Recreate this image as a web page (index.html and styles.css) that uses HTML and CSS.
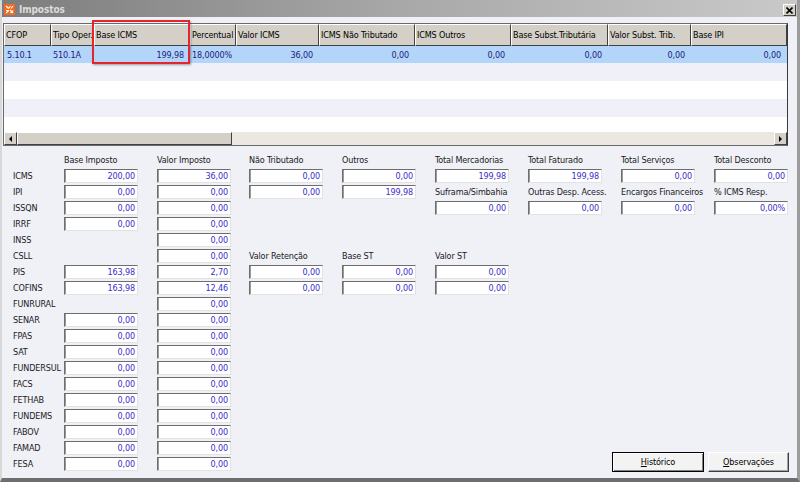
FILE: index.html
```html
<!DOCTYPE html>
<html lang="pt-BR">
<head>
  <meta charset="UTF-8">
  <title>Impostos</title>
  <link rel="stylesheet" href="styles.css">
</head>
<body>
  <div class="window">
    <!-- barra de título -->
    <div class="titlebar">
      <svg class="app-icon" width="11" height="11" viewBox="0 0 11 11">
        <rect width="11" height="11" fill="#f26a1b"/>
        <path d="M2 2l2.5 2.5M6.5 2l-2 2.5M2 6.5h3M6 6l3 3M9 2L7 4.5M2 9l2.5-2M6.5 9l2.5-2.5" stroke="#fff" stroke-width="1.1" fill="none"/>
      </svg>
      <span class="title">Impostos</span>
      <span class="close-btn">
        <svg width="7" height="7" viewBox="0 0 7 7"><path d="M0.5 0.5l6 6M6.5 0.5l-6 6" stroke="#000" stroke-width="1.6"/></svg>
      </span>
    </div>

    <div class="content">
      <!-- grade de CFOP -->
      <div class="grid">
        <div class="grid-head cols">
          <div>CFOP</div>
          <div>Tipo Oper.</div>
          <div>Base ICMS</div>
          <div>Percentual</div>
          <div>Valor ICMS</div>
          <div>ICMS Não Tributado</div>
          <div>ICMS Outros</div>
          <div>Base Subst.Tributária</div>
          <div>Valor Subst. Trib.</div>
          <div>Base IPI</div>
        </div>
        <div class="grid-body">
          <div class="grid-row cols selected">
            <div class="pad">5.10.1</div>
            <div>510.1A</div>
            <div class="num">199,98</div>
            <div>18,0000%</div>
            <div class="num">36,00</div>
            <div class="num">0,00</div>
            <div class="num">0,00</div>
            <div class="num">0,00</div>
            <div class="num">0,00</div>
            <div class="num">0,00</div>
          </div>
          <div class="grid-row alt"></div>
          <div class="grid-row"></div>
          <div class="grid-row alt"></div>
          <div class="grid-row"></div>
        </div>
        <div class="hscroll">
          <span class="sb-btn"><i class="arrow-left"></i></span>
          <span class="sb-thumb"></span>
          <span class="sb-track"></span>
          <span class="sb-btn"><i class="arrow-right"></i></span>
        </div>
      </div>
      <div class="highlight"></div>

      <!-- valores dos impostos -->
      <div class="form">
        <div class="tax-table">
          <div></div><div class="col-title">Base Imposto</div><div class="col-title">Valor Imposto</div>
          <div class="tax-name">ICMS</div><div class="field">200,00</div><div class="field">36,00</div>
          <div class="tax-name">IPI</div><div class="field">0,00</div><div class="field">0,00</div>
          <div class="tax-name">ISSQN</div><div class="field">0,00</div><div class="field">0,00</div>
          <div class="tax-name">IRRF</div><div class="field">0,00</div><div class="field">0,00</div>
          <div class="tax-name">INSS</div><div></div><div class="field">0,00</div>
          <div class="tax-name">CSLL</div><div></div><div class="field">0,00</div>
          <div class="tax-name">PIS</div><div class="field">163,98</div><div class="field">2,70</div>
          <div class="tax-name">COFINS</div><div class="field">163,98</div><div class="field">12,46</div>
          <div class="tax-name">FUNRURAL</div><div></div><div class="field">0,00</div>
          <div class="tax-name">SENAR</div><div class="field">0,00</div><div class="field">0,00</div>
          <div class="tax-name">FPAS</div><div class="field">0,00</div><div class="field">0,00</div>
          <div class="tax-name">SAT</div><div class="field">0,00</div><div class="field">0,00</div>
          <div class="tax-name">FUNDERSUL</div><div class="field">0,00</div><div class="field">0,00</div>
          <div class="tax-name">FACS</div><div class="field">0,00</div><div class="field">0,00</div>
          <div class="tax-name">FETHAB</div><div class="field">0,00</div><div class="field">0,00</div>
          <div class="tax-name">FUNDEMS</div><div class="field">0,00</div><div class="field">0,00</div>
          <div class="tax-name">FABOV</div><div class="field">0,00</div><div class="field">0,00</div>
          <div class="tax-name">FAMAD</div><div class="field">0,00</div><div class="field">0,00</div>
          <div class="tax-name">FESA</div><div class="field">0,00</div><div class="field">0,00</div>
        </div>

        <div class="side">
          <div class="side-block">
            <div class="field-col">
              <div class="col-title">Não Tributado</div>
              <div class="field">0,00</div>
              <div class="field">0,00</div>
            </div>
            <div class="field-col">
              <div class="col-title">Outros</div>
              <div class="field">0,00</div>
              <div class="field">199,98</div>
            </div>
            <div class="field-col">
              <div class="col-title">Total Mercadorias</div>
              <div class="field">199,98</div>
              <div class="col-title">Suframa/Simbahia</div>
              <div class="field">0,00</div>
            </div>
            <div class="field-col">
              <div class="col-title">Total Faturado</div>
              <div class="field">199,98</div>
              <div class="col-title">Outras Desp. Acess.</div>
              <div class="field">0,00</div>
            </div>
            <div class="field-col">
              <div class="col-title">Total Serviços</div>
              <div class="field">0,00</div>
              <div class="col-title">Encargos Financeiros</div>
              <div class="field">0,00</div>
            </div>
            <div class="field-col">
              <div class="col-title">Total Desconto</div>
              <div class="field">0,00</div>
              <div class="col-title">% ICMS Resp.</div>
              <div class="field">0,00%</div>
            </div>
          </div>

          <div class="side-block st-block">
            <div class="field-col">
              <div class="col-title">Valor Retenção</div>
              <div class="field">0,00</div>
              <div class="field">0,00</div>
            </div>
            <div class="field-col">
              <div class="col-title">Base ST</div>
              <div class="field">0,00</div>
              <div class="field">0,00</div>
            </div>
            <div class="field-col">
              <div class="col-title">Valor ST</div>
              <div class="field">0,00</div>
              <div class="field">0,00</div>
            </div>
          </div>

          <div class="buttons">
            <button class="btn default" type="button"><u>H</u>istórico</button>
            <button class="btn" type="button"><u>O</u>bservações</button>
          </div>
        </div>
      </div>
    </div>
  </div>
</body>
</html>
```

FILE: styles.css
```css
/* cores da janela */
:root {
  --face: #d4d0c8;
  --shadow: #808080;
  --dark: #404040;
  --window-bg: #f0f0f7;
  --value: #3a2fc6;
  --row-alt: #eff0f8;
  --selected: #b3d5fa;
}
* {
  box-sizing: border-box;
}
body {
  margin: 0;
  width: 800px;
  height: 482px;
  overflow: hidden;
  font-family: "DejaVu Sans Condensed", "Liberation Sans", sans-serif;
  font-size: 9px;
  letter-spacing: -0.15px;
  color: #111;
  background: var(--window-bg);
}
.window {
  height: 482px;
  display: flex;
  flex-direction: column;
  border-left: 2px solid #d8d8d8;
  border-right: 3px solid #9c9c9c;
  border-bottom: 4px solid #6e6e6e;
  background: var(--window-bg);
}
/* barra de título */
.titlebar {
  flex: none;
  height: 17px;
  display: flex;
  align-items: center;
  padding: 0 1px 0 2px;
  background: linear-gradient(to right, #7d7d7d, #a8a8a8 50%, #c9c9c9);
}
.app-icon {
  flex: none;
  margin-top: 2px;
}
.title {
  margin-left: 4px;
  margin-top: 1px;
  font-size: 10px;
  font-weight: bold;
  letter-spacing: -0.1px;
  color: #dcdcdc;
}
.close-btn {
  margin-left: auto;
  width: 13px;
  height: 12px;
  margin-top: 3px;
  display: flex;
  align-items: center;
  justify-content: center;
  background: var(--face);
  border: 1px solid;
  border-color: #fff var(--dark) var(--dark) #fff;
}
.content {
  flex: 1;
  position: relative;
  display: flex;
  flex-direction: column;
  padding-top: 6px;
}
/* grade */
.grid {
  width: 785px;
  margin-left: 1px;
  border: 1px solid #6a6a6a;
  border-right-color: #3a3a3a;
  background: #fff;
}
.cols {
  display: grid;
  grid-template-columns: 47px 43px 96px 46px 83px 96px 96px 97px 83px 96px;
}
.grid-head {
  height: 22px;
  background: var(--face);
}
.grid-head div {
  display: flex;
  align-items: center;
  padding-left: 1px;
  white-space: nowrap;
  overflow: hidden;
  color: #000;
  border: 1px solid;
  border-color: #fff var(--dark) var(--dark) #fff;
}
.grid-body {
  height: 86px;
  overflow: hidden;
}
.grid-row {
  height: 18px;
}
.grid-row.alt {
  background: var(--row-alt);
}
.grid-row.selected {
  height: 17px;
  background: var(--selected);
  color: #22227a;
  align-items: center;
}
.grid-row div {
  padding-left: 2px;
  white-space: nowrap;
}
.grid-row .pad {
  padding-left: 3px;
}
.grid-row .num {
  text-align: right;
  padding-right: 6px;
}
/* barra de rolagem */
.hscroll {
  height: 13px;
  display: flex;
  background: #ebe8e2;
}
.sb-btn,
.sb-thumb {
  height: 13px;
  background: var(--face);
  border: 1px solid;
  border-color: #fff var(--dark) var(--dark) #fff;
}
.sb-btn {
  width: 13px;
  display: flex;
  align-items: center;
  justify-content: center;
}
.sb-thumb {
  width: 215px;
}
.sb-track {
  flex: 1;
}
.arrow-left,
.arrow-right {
  width: 0;
  height: 0;
  border-top: 3px solid transparent;
  border-bottom: 3px solid transparent;
}
.arrow-left {
  border-right: 3px solid #000;
}
.arrow-right {
  border-left: 3px solid #000;
}
/* destaque vermelho */
.highlight {
  position: absolute;
  left: 90px;
  top: 3px;
  width: 98px;
  height: 44px;
  border: 2px solid #e4262c;
  box-shadow: 1px 1px 2px rgba(0, 0, 0, 0.35);
}
/* formulário */
.form {
  flex: 1;
  display: flex;
  padding: 7px 8px 6px 11px;
}
.tax-table {
  display: grid;
  grid-template-columns: 51px 93px 74px;
  grid-auto-rows: 14px;
  row-gap: 2px;
  align-content: start;
}
.tax-name,
.col-title {
  line-height: 14px;
  white-space: nowrap;
  color: #1a1a1a;
}
.field {
  width: 74px;
  height: 14px;
  line-height: 12px;
  padding-right: 2px;
  text-align: right;
  color: var(--value);
  background: #fff;
  border: 1px solid;
  border-color: #6d6d6d #e2e2e2 #e2e2e2 #6d6d6d;
  box-shadow: inset 1px 0 0 #9a9a9a;
}
.side {
  flex: 1;
  margin-left: 18px;
  display: flex;
  flex-direction: column;
}
.side-block {
  display: flex;
  gap: 19px;
}
.field-col {
  width: 74px;
  display: flex;
  flex-direction: column;
  gap: 2px;
}
.st-block {
  margin-top: 34px;
}
.buttons {
  margin-top: auto;
  display: flex;
  justify-content: flex-end;
  gap: 4px;
}
.btn {
  height: 20px;
  padding: 0;
  font: inherit;
  letter-spacing: inherit;
  color: #000;
  background: #f3f3f3;
  border: 1px solid;
  border-color: #fff #404040 #404040 #fff;
  box-shadow: inset -1px -1px 0 #a0a0a0;
}
.btn.default {
  width: 92px;
  border-color: #000;
  box-shadow: inset 1px 1px 0 #fff, inset -1px -1px 0 #808080;
}
.btn:not(.default) {
  width: 81px;
}
```
